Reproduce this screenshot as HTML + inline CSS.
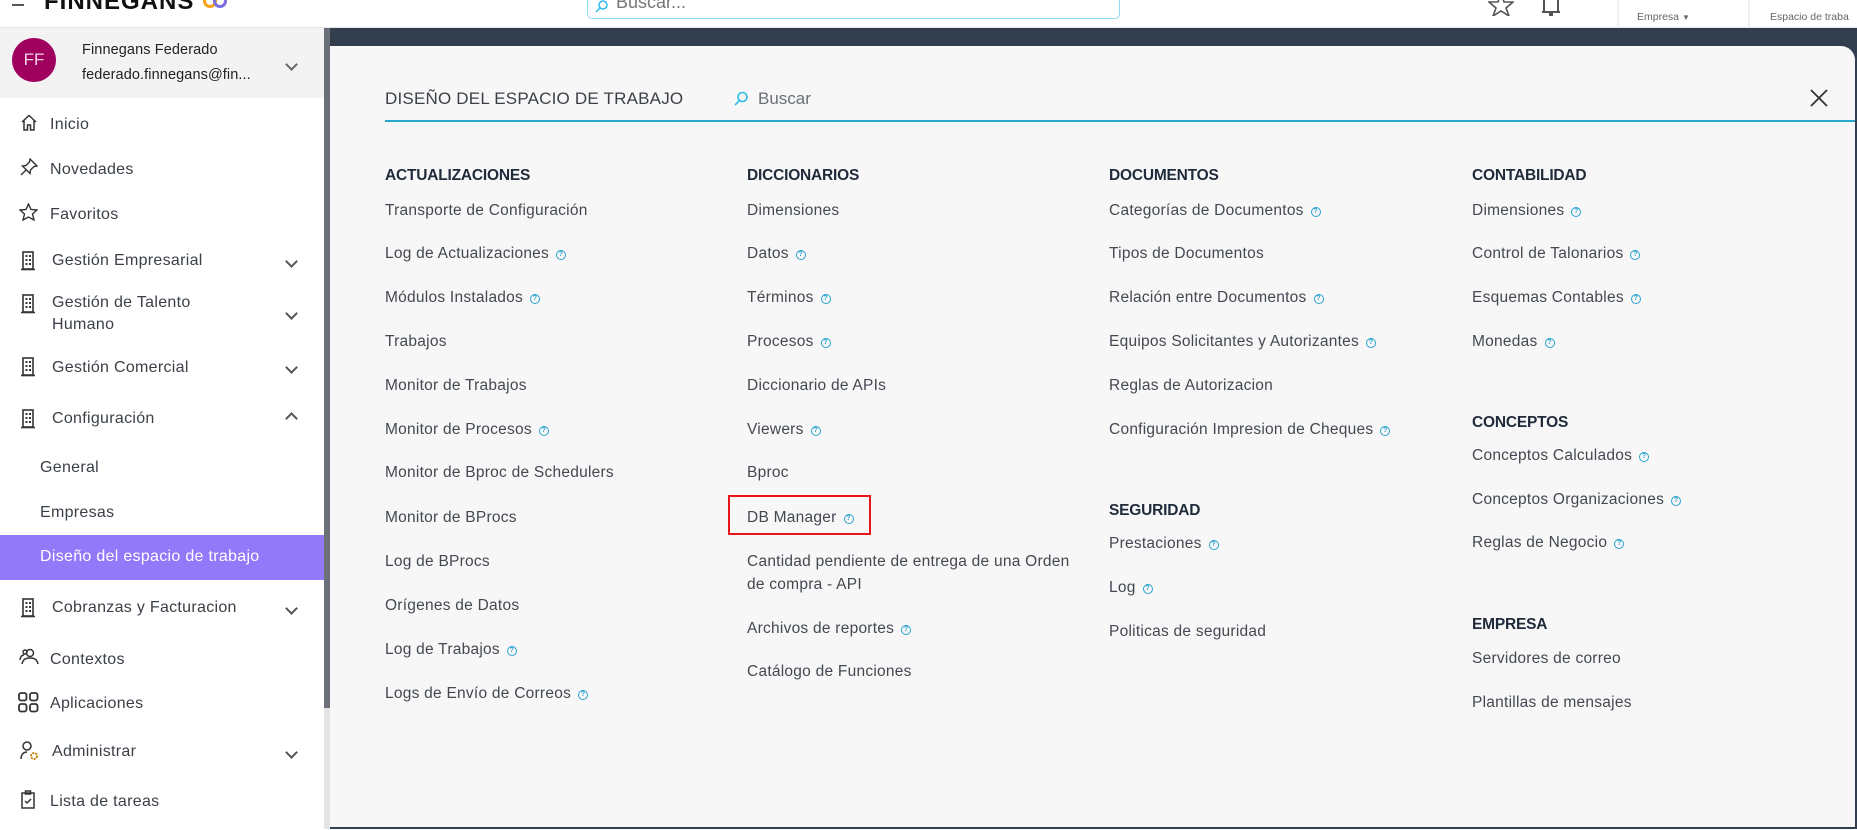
<!DOCTYPE html>
<html><head><meta charset="utf-8"><style>
*{margin:0;padding:0;box-sizing:border-box}
body{width:1857px;height:829px;overflow:hidden;background:#fff;font-family:"Liberation Sans",sans-serif;position:relative;color:#3b4048}
.a{position:absolute;white-space:nowrap}
.hdr{position:absolute;left:0;top:0;width:1857px;height:28px;background:#fff;border-bottom:1px solid #e6e6e6}
.side{position:absolute;left:0;top:28px;width:324px;height:801px;background:#fff}
.sb{position:absolute;left:324px;top:28px;width:6px;height:680px;background:#6b7079}
.sbt{position:absolute;left:324px;top:708px;width:6px;height:121px;background:#e4e4e4}
.dark{position:absolute;left:330px;top:28px;width:1527px;height:801px;background:#323d4e}
.panel{position:absolute;left:330px;top:46px;width:1525px;height:781px;background:#f7f7f7;border-top-right-radius:14px}
.s{position:absolute;left:0;top:2px;width:330px;height:801px}
.si{font-size:16px;color:#3b4048;letter-spacing:.3px}
.it{font-size:15.5px;color:#434851;letter-spacing:.25px}
.h{font-size:15.5px;color:#1f2a3a;font-weight:bold;letter-spacing:-.2px}
.q{display:inline-block;width:10px;height:10px;border:1.3px solid #2aa3cf;border-radius:50%;font-size:7px;line-height:8px;text-align:center;color:#2aa3cf;margin-left:7px;vertical-align:2px;font-weight:bold}
.chev{position:absolute;width:9px;height:9px;border-right:2px solid #555;border-bottom:2px solid #555;transform:rotate(45deg)}
.chevu{position:absolute;width:9px;height:9px;border-left:2px solid #555;border-top:2px solid #555;transform:rotate(45deg)}
.c{position:absolute;left:0;top:1px;width:1857px;height:829px}
</style></head><body>
<div class="hdr"></div>
<div class="a" style="left:12px;top:4px;width:12px;height:1.5px;background:#555"></div>
<div class="a" style="left:44px;top:-12px;font-size:24px;font-weight:bold;color:#111;letter-spacing:1px">FINNEGANS</div>
<div class="a" style="left:203px;top:-6px;width:14px;height:14px;border:3px solid #f7a21b;border-radius:50%"></div>
<div class="a" style="left:213px;top:-6px;width:14px;height:14px;border:3px solid #7b6ee0;border-radius:50%"></div>
<div class="a" style="left:587px;top:-10px;width:533px;height:29px;border:1.5px solid #8fdcf3;border-radius:5px;background:#fff"></div>
<svg class="a" style="left:595px;top:0" width="14" height="14" viewBox="0 0 14 14"><circle cx="8" cy="5" r="4" fill="none" stroke="#2fbbe8" stroke-width="1.5"/><path d="M5 8L1 12" stroke="#2fbbe8" stroke-width="1.5"/></svg>
<div class="a" style="left:616px;top:-8px;font-size:18px;color:#777">Buscar...</div>
<svg class="a" style="left:1488px;top:0" width="26" height="16" viewBox="0 0 26 16"><path d="M13 -8 L16 2 L25 2 L18 8 L21 16 L13 11 L5 16 L8 8 L1 2 L10 2 Z" fill="none" stroke="#555" stroke-width="1.6"/></svg>
<svg class="a" style="left:1538px;top:0" width="26" height="18" viewBox="0 0 26 18"><path d="M6 0 V12 H20 V0 M4 12 H22" fill="none" stroke="#555" stroke-width="2"/><rect x="11" y="13" width="4" height="3" fill="#555"/></svg>
<div class="a" style="left:1617px;top:0;width:2px;height:28px;background:#f0f0f0"></div>
<div class="a" style="left:1748px;top:0;width:2px;height:28px;background:#f0f0f0"></div>
<div class="a" style="left:1637px;top:11px;font-size:10.5px;color:#666">Empresa <span style="font-size:8px">▼</span></div>
<div class="a" style="left:1770px;top:11px;font-size:10.5px;color:#666">Espacio de traba</div>

<div class="side"></div>
<div class="a" style="left:0;top:28px;width:324px;height:70px;background:#f3f3f3"></div>
<div class="a" style="left:12px;top:38px;width:44px;height:44px;border-radius:50%;background:#a0005e;color:#f3d6e6;font-size:17px;text-align:center;line-height:44px">FF</div>
<div class="a" style="left:82px;top:42px;font-size:14.5px;color:#222;letter-spacing:.1px">Finnegans Federado</div>
<div class="a" style="left:82px;top:67px;font-size:14.5px;color:#222;letter-spacing:.1px">federado.finnegans@fin...</div>
<div class="chev" style="left:287px;top:60px;border-color:#666"></div>
<div class="a" style="left:0;top:535px;width:324px;height:45px;background:#9179fa"></div>

<div class="s">
<svg class="a" style="left:20px;top:112px" width="18" height="17" viewBox="0 0 18 17"><path d="M2 8L9 1.5L16 8M4 6.5V16H7.5V11H10.5V16H14V6.5" fill="none" stroke="#333" stroke-width="1.5"/></svg>
<div class="a si" style="left:50px;top:114px">Inicio</div>
<svg class="a" style="left:20px;top:156px" width="18" height="18" viewBox="0 0 18 18"><path d="M10 1L17 8L14 8.5L10.5 12L10 15.5L2.5 8L6 7.5L9.5 4Z M6 12L1 17" fill="none" stroke="#333" stroke-width="1.4"/></svg>
<div class="a si" style="left:50px;top:159px">Novedades</div>
<svg class="a" style="left:19px;top:201px" width="19" height="18" viewBox="0 0 19 18"><path d="M9.5 1L12 6.5L18 7L13.5 11L15 17L9.5 14L4 17L5.5 11L1 7L7 6.5Z" fill="none" stroke="#333" stroke-width="1.4"/></svg>
<div class="a si" style="left:50px;top:204px">Favoritos</div>
<div class="a si" style="left:52px;top:250px">Gestión Empresarial</div>
<div class="a si" style="left:52px;top:292px">Gestión de Talento</div>
<div class="a si" style="left:52px;top:314px">Humano</div>
<div class="a si" style="left:52px;top:357px">Gestión Comercial</div>
<div class="a si" style="left:52px;top:408px">Configuración</div>
<div class="a si" style="left:40px;top:457px">General</div>
<div class="a si" style="left:40px;top:502px">Empresas</div>
<div class="a si" style="left:40px;top:546px;color:#fff">Diseño del espacio de trabajo</div>
<div class="a si" style="left:52px;top:597px">Cobranzas y Facturacion</div>
<div class="a si" style="left:50px;top:649px">Contextos</div>
<div class="a si" style="left:50px;top:693px">Aplicaciones</div>
<div class="a si" style="left:52px;top:741px">Administrar</div>
<div class="a si" style="left:50px;top:791px">Lista de tareas</div>
<svg class="a" style="left:20px;top:249px" width="16" height="20" viewBox="0 0 16 20"><g fill="none" stroke="#333" stroke-width="1.6"><rect x="3" y="1" width="10" height="17"/><path d="M1 18.5H15"/></g><g fill="#333"><rect x="5.5" y="4" width="2" height="2"/><rect x="9" y="4" width="2" height="2"/><rect x="5.5" y="8" width="2" height="2"/><rect x="9" y="8" width="2" height="2"/><rect x="5.5" y="12" width="2" height="2"/><rect x="9" y="12" width="2" height="2"/></g></svg>
<svg class="a" style="left:20px;top:292px" width="16" height="20" viewBox="0 0 16 20"><g fill="none" stroke="#333" stroke-width="1.6"><rect x="3" y="1" width="10" height="17"/><path d="M1 18.5H15"/></g><g fill="#333"><rect x="5.5" y="4" width="2" height="2"/><rect x="9" y="4" width="2" height="2"/><rect x="5.5" y="8" width="2" height="2"/><rect x="9" y="8" width="2" height="2"/><rect x="5.5" y="12" width="2" height="2"/><rect x="9" y="12" width="2" height="2"/></g></svg>
<svg class="a" style="left:20px;top:355px" width="16" height="20" viewBox="0 0 16 20"><g fill="none" stroke="#333" stroke-width="1.6"><rect x="3" y="1" width="10" height="17"/><path d="M1 18.5H15"/></g><g fill="#333"><rect x="5.5" y="4" width="2" height="2"/><rect x="9" y="4" width="2" height="2"/><rect x="5.5" y="8" width="2" height="2"/><rect x="9" y="8" width="2" height="2"/><rect x="5.5" y="12" width="2" height="2"/><rect x="9" y="12" width="2" height="2"/></g></svg>
<svg class="a" style="left:20px;top:407px" width="16" height="20" viewBox="0 0 16 20"><g fill="none" stroke="#333" stroke-width="1.6"><rect x="3" y="1" width="10" height="17"/><path d="M1 18.5H15"/></g><g fill="#333"><rect x="5.5" y="4" width="2" height="2"/><rect x="9" y="4" width="2" height="2"/><rect x="5.5" y="8" width="2" height="2"/><rect x="9" y="8" width="2" height="2"/><rect x="5.5" y="12" width="2" height="2"/><rect x="9" y="12" width="2" height="2"/></g></svg>
<svg class="a" style="left:20px;top:596px" width="16" height="20" viewBox="0 0 16 20"><g fill="none" stroke="#333" stroke-width="1.6"><rect x="3" y="1" width="10" height="17"/><path d="M1 18.5H15"/></g><g fill="#333"><rect x="5.5" y="4" width="2" height="2"/><rect x="9" y="4" width="2" height="2"/><rect x="5.5" y="8" width="2" height="2"/><rect x="9" y="8" width="2" height="2"/><rect x="5.5" y="12" width="2" height="2"/><rect x="9" y="12" width="2" height="2"/></g></svg>
<svg class="a" style="left:18px;top:646px" width="22" height="18" viewBox="0 0 22 18"><g fill="none" stroke="#333" stroke-width="1.5"><circle cx="12" cy="5" r="3.5"/><path d="M4 16c1-5 4-6 8-6s7 1 8 6M2 12c0-3 2-5 4-5M5 4a2 2 0 1 1 0 .1"/></g></svg>
<svg class="a" style="left:18px;top:690px" width="21" height="21" viewBox="0 0 21 21"><g fill="none" stroke="#333" stroke-width="1.8"><rect x="1" y="1" width="7.5" height="7.5" rx="2"/><rect x="12" y="1" width="7.5" height="7.5" rx="2"/><rect x="1" y="12" width="7.5" height="7.5" rx="2"/><rect x="12" y="12" width="7.5" height="7.5" rx="2"/></g></svg>
<svg class="a" style="left:20px;top:739px" width="20" height="20" viewBox="0 0 20 20"><g fill="none" stroke="#333" stroke-width="1.5"><circle cx="7" cy="5" r="4"/><path d="M1 18c0-5 3-7 6-7"/></g><circle cx="14" cy="15" r="3" fill="none" stroke="#c77a00" stroke-width="1.8" stroke-dasharray="2 1"/></svg>
<svg class="a" style="left:21px;top:788px" width="14" height="19" viewBox="0 0 14 19"><g fill="none" stroke="#333" stroke-width="1.5"><rect x="1" y="3" width="12" height="15"/><rect x="4.5" y="1" width="5" height="3"/><path d="M4 11l2 2 4-4"/></g></svg>
<div class="chev" style="left:287px;top:255px"></div>
<div class="chev" style="left:287px;top:307px"></div>
<div class="chev" style="left:287px;top:361px"></div>
<div class="chevu" style="left:287px;top:412px"></div>
<div class="chev" style="left:287px;top:602px"></div>
<div class="chev" style="left:287px;top:746px"></div>
</div>

<div class="dark"></div>
<div class="sb"></div><div class="sbt"></div>
<div class="panel"></div>
<div class="a" style="left:385px;top:89px;font-size:17px;color:#3b4048;letter-spacing:.2px">DISEÑO DEL ESPACIO DE TRABAJO</div>
<svg class="a" style="left:733px;top:91px" width="16" height="16" viewBox="0 0 16 16"><circle cx="9.5" cy="6" r="4.5" fill="none" stroke="#2fbbe8" stroke-width="1.6"/><path d="M6.5 9.5L2 14" stroke="#2fbbe8" stroke-width="1.6"/></svg>
<div class="a" style="left:758px;top:89px;font-size:17px;color:#6a6f78">Buscar</div>
<div class="a" style="left:385px;top:120px;width:1470px;height:2px;background:#27a9c9"></div>
<svg class="a" style="left:1810px;top:89px" width="18" height="18" viewBox="0 0 18 18"><path d="M1 1L17 17M17 1L1 17" stroke="#333" stroke-width="1.8"/></svg>

<div class="c">
<div class="a h" style="left:385px;top:166px">ACTUALIZACIONES</div>
<div class="a it" style="left:385px;top:201px">Transporte de Configuración</div>
<div class="a it" style="left:385px;top:244px">Log de Actualizaciones<span class="q">?</span></div>
<div class="a it" style="left:385px;top:288px">Módulos Instalados<span class="q">?</span></div>
<div class="a it" style="left:385px;top:332px">Trabajos</div>
<div class="a it" style="left:385px;top:376px">Monitor de Trabajos</div>
<div class="a it" style="left:385px;top:420px">Monitor de Procesos<span class="q">?</span></div>
<div class="a it" style="left:385px;top:463px">Monitor de Bproc de Schedulers</div>
<div class="a it" style="left:385px;top:508px">Monitor de BProcs</div>
<div class="a it" style="left:385px;top:552px">Log de BProcs</div>
<div class="a it" style="left:385px;top:596px">Orígenes de Datos</div>
<div class="a it" style="left:385px;top:640px">Log de Trabajos<span class="q">?</span></div>
<div class="a it" style="left:385px;top:684px">Logs de Envío de Correos<span class="q">?</span></div>
<div class="a h" style="left:747px;top:166px">DICCIONARIOS</div>
<div class="a it" style="left:747px;top:201px">Dimensiones</div>
<div class="a it" style="left:747px;top:244px">Datos<span class="q">?</span></div>
<div class="a it" style="left:747px;top:288px">Términos<span class="q">?</span></div>
<div class="a it" style="left:747px;top:332px">Procesos<span class="q">?</span></div>
<div class="a it" style="left:747px;top:376px">Diccionario de APIs</div>
<div class="a it" style="left:747px;top:420px">Viewers<span class="q">?</span></div>
<div class="a it" style="left:747px;top:463px">Bproc</div>
<div class="a it" style="left:747px;top:508px">DB Manager<span class="q">?</span></div>
<div class="a" style="left:728px;top:494px;width:143px;height:40px;border:2px solid #e8141b"></div>
<div class="a it" style="left:747px;top:552px">Cantidad pendiente de entrega de una Orden</div>
<div class="a it" style="left:747px;top:575px">de compra - API</div>
<div class="a it" style="left:747px;top:619px">Archivos de reportes<span class="q">?</span></div>
<div class="a it" style="left:747px;top:662px">Catálogo de Funciones</div>
<div class="a h" style="left:1109px;top:166px">DOCUMENTOS</div>
<div class="a it" style="left:1109px;top:201px">Categorías de Documentos<span class="q">?</span></div>
<div class="a it" style="left:1109px;top:244px">Tipos de Documentos</div>
<div class="a it" style="left:1109px;top:288px">Relación entre Documentos<span class="q">?</span></div>
<div class="a it" style="left:1109px;top:332px">Equipos Solicitantes y Autorizantes<span class="q">?</span></div>
<div class="a it" style="left:1109px;top:376px">Reglas de Autorizacion</div>
<div class="a it" style="left:1109px;top:420px">Configuración Impresion de Cheques<span class="q">?</span></div>
<div class="a h" style="left:1109px;top:501px">SEGURIDAD</div>
<div class="a it" style="left:1109px;top:534px">Prestaciones<span class="q">?</span></div>
<div class="a it" style="left:1109px;top:578px">Log<span class="q">?</span></div>
<div class="a it" style="left:1109px;top:622px">Politicas de seguridad</div>
<div class="a h" style="left:1472px;top:166px">CONTABILIDAD</div>
<div class="a it" style="left:1472px;top:201px">Dimensiones<span class="q">?</span></div>
<div class="a it" style="left:1472px;top:244px">Control de Talonarios<span class="q">?</span></div>
<div class="a it" style="left:1472px;top:288px">Esquemas Contables<span class="q">?</span></div>
<div class="a it" style="left:1472px;top:332px">Monedas<span class="q">?</span></div>
<div class="a h" style="left:1472px;top:413px">CONCEPTOS</div>
<div class="a it" style="left:1472px;top:446px">Conceptos Calculados<span class="q">?</span></div>
<div class="a it" style="left:1472px;top:490px">Conceptos Organizaciones<span class="q">?</span></div>
<div class="a it" style="left:1472px;top:533px">Reglas de Negocio<span class="q">?</span></div>
<div class="a h" style="left:1472px;top:615px">EMPRESA</div>
<div class="a it" style="left:1472px;top:649px">Servidores de correo</div>
<div class="a it" style="left:1472px;top:693px">Plantillas de mensajes</div>
</div>
</body></html>
